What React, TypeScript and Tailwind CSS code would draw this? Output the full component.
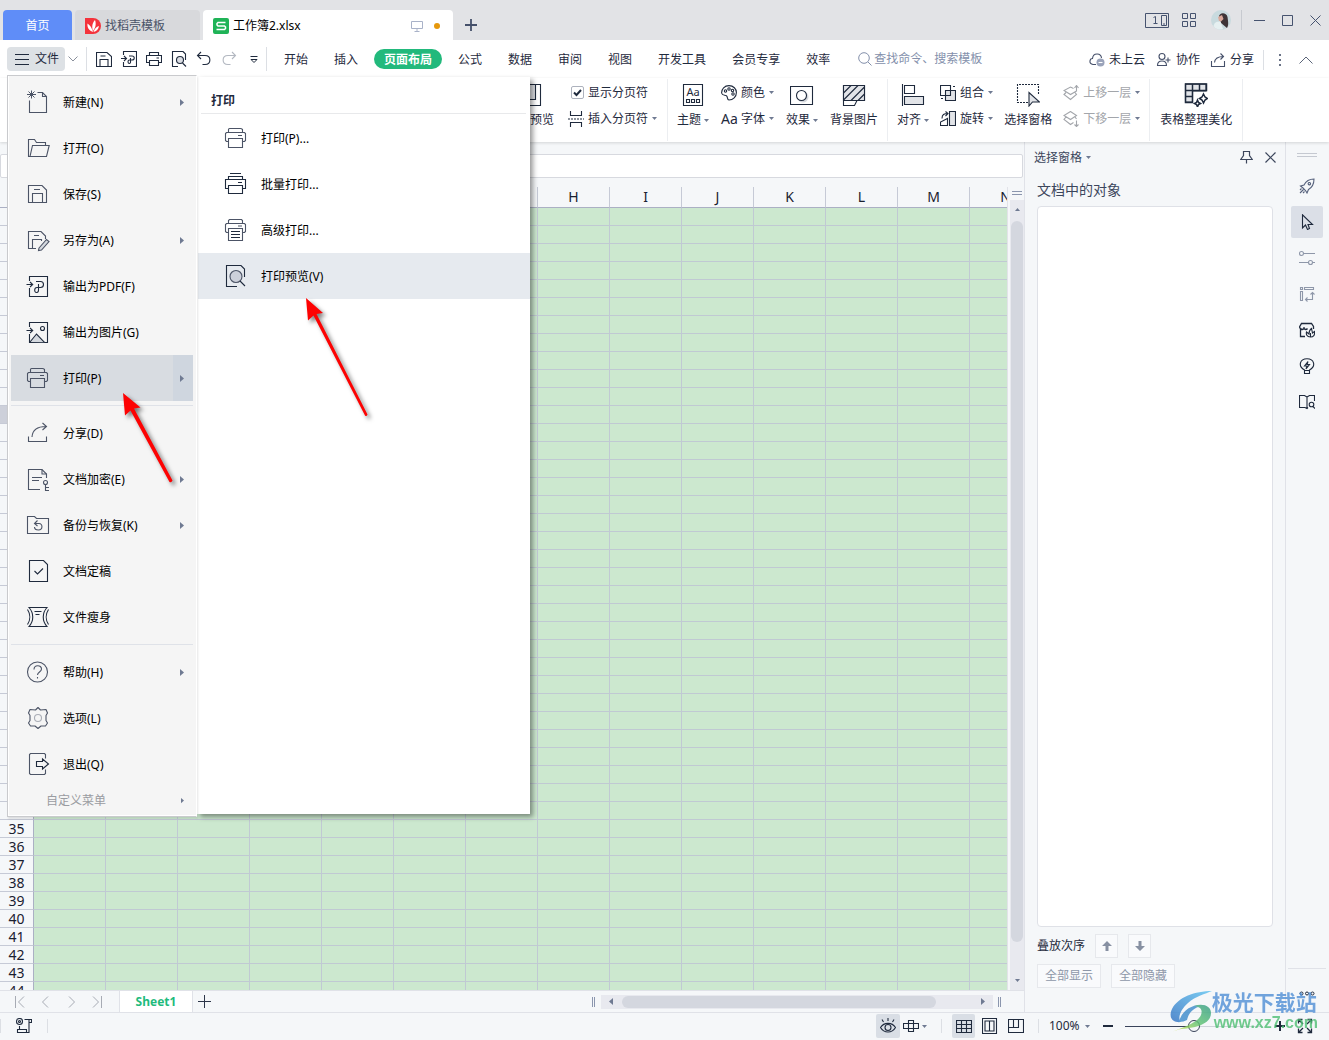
import React from 'react';
import { clsx } from 'clsx';

interface IconProps {
  className?: string;
  children?: React.ReactNode;
}

function Icon24({ className, children }: IconProps) {
  return (
    <svg viewBox="0 0 24 24" fill="none" stroke="currentColor" strokeWidth="1.1" className={clsx('h-6 w-6 shrink-0', className)} aria-hidden="true">
      {children}
    </svg>
  );
}

function Icon16({ className, children }: IconProps) {
  return (
    <svg viewBox="0 0 16 16" fill="none" stroke="currentColor" strokeWidth="1.1" className={clsx('h-4 w-4 shrink-0', className)} aria-hidden="true">
      {children}
    </svg>
  );
}

function Caret({ className }: { className?: string }) {
  return (
    <svg viewBox="0 0 5 3" className={clsx('h-[3px] w-[5px] shrink-0 fill-[#6f7a92]', className)} aria-hidden="true">
      <path d="M0 0H5L2.5 3Z" />
    </svg>
  );
}

function RightArrow({ className }: { className?: string }) {
  return (
    <svg viewBox="0 0 4 7" className={clsx('h-[7px] w-1 shrink-0 fill-[#6f7a92]', className)} aria-hidden="true">
      <path d="M0 0L4 3.5L0 7Z" />
    </svg>
  );
}

const icons = {
  newDoc: (
    <Icon24>
      <path d="M11.5 2.5H16.5L20.5 6.5V22.5H3.5V10.5" />
      <path d="M16.5 2.5V6.5H20.5" />
      <path d="M5.5 .5V8.5M1 4.5H10M2.5 1.5L8.5 7.5M8.5 1.5L2.5 7.5" strokeWidth="1" />
    </Icon24>
  ),
  open: (
    <Icon24>
      <path d="M4.5 20.5H2.5V3.5H8.5L10.5 6.5H19.5V9.5" />
      <path d="M6.5 9.5H23.2L20.5 20.5H4Z" />
    </Icon24>
  ),
  save: (
    <Icon24>
      <path d="M2.5 3.5H16L20.5 8V20.5H2.5Z" />
      <path d="M6.5 20.5V11.5H16.5V20.5M8 7.5H14" />
    </Icon24>
  ),
  saveAs: (
    <Icon24>
      <path d="M10 20.5H2.5V3.5H15L19.5 8V11" />
      <path d="M6.5 20.5V11.5H15.5V13M8 7.5H13" />
      <path d="M13 20L20.5 11.5L23 13.5L15.5 22L12.5 22.5Z" fill="#d5d9df" />
    </Icon24>
  ),
  pdf: (
    <Icon24 className="text-[#1f2a3d]">
      <path d="M3.5 7V2.5H21.5V22.5H3.5V14" />
      <path d="M.5 10.5H6.5M4 8L6.7 10.5L4 13" />
      <path d="M10 7.5H14.5C18.5 7.5 18.5 13.5 14.5 13.5H11C8 13.5 8 18.5 10.5 18.5C13 18.5 12.5 16 12.5 12V10" />
    </Icon24>
  ),
  image: (
    <Icon24 className="text-[#1f2a3d]">
      <path d="M3.5 7V2.5H21.5V22.5H3.5V14" />
      <path d="M.5 10.5H6.5M4 8L6.7 10.5L4 13" />
      <circle cx="16.5" cy="8.5" r="2" />
      <path d="M4 22L10.5 14L18.5 22.3" fill="#d5d9df" />
    </Icon24>
  ),
  print: (
    <Icon24>
      <path d="M4.5 6V3.5Q4.5 2.5 5.5 2.5H16.500Q17.500 2.500 18.500 3.500V6" />
      <path d="M4.500 15.500H2.500L1.500 14.500V7.500L2.500 6.500H20.500L21.500 7.500V14.500L20.500 15.500H18.500" />
      <path d="M4.500 12.500H18.500V21.500H4.500ZM14 9.500H18" />
    </Icon24>
  ),
  batchPrint: (
    <Icon24 className="text-[#1f2a3d]">
      <path d="M6 1.500H17M4.500 7V4.500H18.500V7" />
      <path d="M4.500 16.500H1.500V7.500H21.500V16.500H18.500" />
      <path d="M4.500 13.500H18.500V21.500H4.500ZM14 10.500H18" />
    </Icon24>
  ),
  advancedPrint: (
    <Icon24>
      <path d="M4.500 5V2.500L5.500 1.500H17.500L18.500 2.500V5" />
      <path d="M4.500 14.500H2.500L1.500 13.500V6.500L2.500 5.500H20.500L21.500 6.500V13.500L20.500 14.500H18.500" />
      <path d="M4.500 10.500H18.500V22.500H4.500ZM14 8H18" />
      <path d="M7 13.500H16M7 16.500H16M7 19.500H16" className="text-[#1f2a3d]" stroke="currentColor" />
    </Icon24>
  ),
  preview: (
    <Icon24 className="text-[#1f2a3d]">
      <path d="M13 22.500H2.500V1.500H17L20.500 5V13" />
      <circle cx="12" cy="12.500" r="6" fill="#ccd0da" stroke="#4c5466" />
      <path d="M16 17L21 22" />
    </Icon24>
  ),
  share: (
    <Icon24>
      <path d="M2.500 15.500V20.500H20.500V15.500" />
      <path d="M6 16C6.500 8.500 12 5.500 20 5.500M16.500 2L20.500 5.500L16.500 9" />
    </Icon24>
  ),
  encrypt: (
    <Icon24>
      <path d="M14 22.500H2.500V2.500H16L20.500 7V11" />
      <path d="M16 2.500V7H20.500M6 10.500H16M6 13.500H13" />
      <circle cx="19.500" cy="15.500" r="2" />
      <path d="M19.500 17.500V24M19.500 20.500H23M19.500 23.500H23" />
    </Icon24>
  ),
  backup: (
    <Icon24>
      <path d="M1.500 20.500V3.500H8.500L10.500 5.500H22.500V20.500Z" />
      <path d="M8.500 10.500H13C17 10.500 17 17 12.500 17C10 17 8.500 16 8.500 14M11.500 7.500L8.500 10.500L11.500 13" />
    </Icon24>
  ),
  finalize: (
    <Icon24 className="text-[#1f2a3d]">
      <path d="M3.500 1.500H17.500L21.500 5.500V22.500H3.500Z" />
      <path d="M8.500 12L11.500 15L17 9.500" />
    </Icon24>
  ),
  slim: (
    <Icon24 className="text-[#1f2a3d]">
      <path d="M3 2.500H21C16 8 16 16 21 21.500H3C8 16 8 8 3 2.500Z" />
      <path d="M1.500 4.500C4.500 9 4.500 15 1.500 19.500M22.500 4.500C19.500 9 19.500 15 22.500 19.500M8.500 6.500H15.500M9.500 9.500H13.500" />
    </Icon24>
  ),
  help: (
    <Icon24>
      <circle cx="11.500" cy="12" r="10" />
      <path d="M8 9.500C8 4.500 15.500 4.500 15.500 9C15.500 12 11.500 12 11.500 15M11.500 17V18.500" />
    </Icon24>
  ),
  options: (
    <Icon24>
      <path d="M9.500 4L12 1.500L14.500 4L20 3.500L21.500 7L20 9.500V14.500L21.500 17L19.500 20L15 20L12 22.500L9 20L4.500 20L2.500 17L4 14.500V9.500L2.500 7L4 3.500Z" strokeLinejoin="round" />
      <circle cx="12" cy="12" r="3.500" stroke="#aaaeb7" />
    </Icon24>
  ),
  exit: (
    <Icon24>
      <path d="M19.500 6.500V2.500L18.500 1.500H4.500L3.500 2.500V21.500L4.500 22.500H18.500L19.500 21.500V17.500" />
      <path d="M10.500 9.500H16.500V7L22.500 12L16.500 17V14.500H10.500Z" stroke="#1f2a3d" />
    </Icon24>
  ),
};

interface MenuEntry {
  label: string;
  icon: React.ReactNode;
  sub?: boolean;
  active?: boolean;
}

const fileMenu: MenuEntry[][] = [
  [
    { label: '新建(N)', icon: icons.newDoc, sub: true },
    { label: '打开(O)', icon: icons.open },
    { label: '保存(S)', icon: icons.save },
    { label: '另存为(A)', icon: icons.saveAs, sub: true },
    { label: '输出为PDF(F)', icon: icons.pdf },
    { label: '输出为图片(G)', icon: icons.image },
    { label: '打印(P)', icon: icons.print, sub: true, active: true },
  ],
  [
    { label: '分享(D)', icon: icons.share },
    { label: '文档加密(E)', icon: icons.encrypt, sub: true },
    { label: '备份与恢复(K)', icon: icons.backup, sub: true },
    { label: '文档定稿', icon: icons.finalize },
    { label: '文件瘦身', icon: icons.slim },
  ],
  [
    { label: '帮助(H)', icon: icons.help, sub: true },
    { label: '选项(L)', icon: icons.options },
    { label: '退出(Q)', icon: icons.exit },
  ],
];

const printMenu: MenuEntry[] = [
  { label: '打印(P)...', icon: icons.print },
  { label: '批量打印...', icon: icons.batchPrint },
  { label: '高级打印...', icon: icons.advancedPrint },
  { label: '打印预览(V)', icon: icons.preview, active: true },
];

const ribbonTabs = ['开始', '插入', '页面布局', '公式', '数据', '审阅', '视图', '开发工具', '会员专享', '效率'];
const columns = 'ABCDEFGHIJKLMN'.split('');
const rows = Array.from({ length: 44 }, (_, i) => i + 1);

function TitleBar() {
  return (
    <header className="flex h-10 shrink-0 items-end bg-[#e2e3e6] pl-[3px]">
      <button className="h-[30px] w-[69px] rounded-t-sm bg-[#5f8df8] pt-[2px] text-white">首页</button>
      <button className="ml-[3px] flex h-[30px] w-[125px] items-center gap-1 rounded-t-sm bg-[#d8d9dc] pl-[10px] pt-[2px] text-[#4a5368]">
        <svg viewBox="0 0 16 16" className="h-4 w-4" aria-hidden="true">
          <path d="M0 0H8A8 8 0 0 1 8 16H0Z" fill="#f4333c" />
          <path d="M8 14C3.500 12.500 2 9 2.500 5.500C5 7 7 10 8 14ZM8 13C6.500 8.500 7.500 4.500 10 2C11.500 6 10.500 10 8 13ZM8.500 14C9.500 10.500 11.500 8.500 14 8C13.500 11 11.500 13.500 8.500 14Z" fill="#fff" />
        </svg>
        找稻壳模板
      </button>
      <div className="ml-[3px] flex h-[30px] w-[250px] items-center rounded-t-sm bg-white px-[10px] pt-[2px] text-black">
        <svg viewBox="0 0 16 16" className="mr-1 h-4 w-4" aria-hidden="true">
          <rect width="16" height="16" rx="2" fill="#1fb357" />
          <path d="M12.500 4.500H5L4 5.500V7L5 8H11.500L12.500 9V10.500L11.500 11.500H3.500" stroke="#fff" strokeWidth="1.500" fill="none" />
        </svg>
        <span className="flex-1">工作簿2.xlsx</span>
        <svg viewBox="0 0 12 12" className="h-3 w-3 text-[#a9b2c8]" fill="none" stroke="currentColor" aria-hidden="true">
          <path d="M.5 1.500H11.500V8.500H.5ZM6 8.500V11.500M3.500 11.500H8.500" />
        </svg>
        <span className="ml-[11px] mr-[3px] h-[6px] w-[6px] rounded-full bg-[#e6980c]" />
      </div>
      <button aria-label="新建标签" className="flex h-[30px] w-9 items-center justify-center text-[#45506a]">
        <svg viewBox="0 0 12 12" className="h-3 w-3" aria-hidden="true">
          <path d="M6 0V12M0 6H12" stroke="currentColor" strokeWidth="1.800" />
        </svg>
      </button>
      <div className="ml-auto flex h-10 items-center text-[#46536f]">
        <button aria-label="窗口布局">
          <svg viewBox="0 0 24 15" className="h-[15px] w-6" fill="none" stroke="currentColor" aria-hidden="true">
            <path d="M.5 .5H23.500V14.500H.5ZM16.500 2.500H21.500V12.500H16.500ZM8.500 4.500L10.500 3.500V10.500M8.500 10.500H12.500M18 11H20" />
          </svg>
        </button>
        <button aria-label="应用" className="ml-[13px]">
          <svg viewBox="0 0 14 14" className="h-[14px] w-[14px]" fill="none" stroke="currentColor" aria-hidden="true">
            <path d="M.5 .5H5.500V5.500H.5ZM8.500 .5H13.500V5.500H8.500ZM.5 8.500H5.500V13.500H.5ZM8.500 8.500H13.500V13.500H8.500Z" />
          </svg>
        </button>
        <button aria-label="账号" className="ml-[15px]">
          <svg viewBox="0 0 20 20" className="h-5 w-5" aria-hidden="true">
            <circle cx="10" cy="10" r="10" fill="#c8dade" />
            <path d="M8 7C8 2 15.500 2 16.500 7C17 11 18 15 16 18L10 13Z" fill="#3d3437" />
            <path d="M7 7L11 5L12.500 9L10 11.500L8 11Z" fill="#d9a99b" />
            <path d="M2.500 16C3.500 12 6 11.500 9.500 11.500L12 19C8 20.500 4.500 19 2.500 16Z" fill="#e6f0f1" />
          </svg>
        </button>
        <span className="ml-[10px] h-5 w-px bg-[#c7cad0]" />
        <button aria-label="最小化" className="ml-3">
          <svg viewBox="0 0 11 11" className="h-[11px] w-[11px]" stroke="currentColor" aria-hidden="true"><path d="M0 5.500H11" /></svg>
        </button>
        <button aria-label="最大化" className="ml-[17px]">
          <svg viewBox="0 0 11 11" className="h-[11px] w-[11px]" fill="none" stroke="currentColor" aria-hidden="true"><path d="M.5 .5H10.500V10.500H.5Z" /></svg>
        </button>
        <button aria-label="关闭" className="ml-[17px] mr-2">
          <svg viewBox="0 0 11 11" className="h-[11px] w-[11px]" stroke="currentColor" aria-hidden="true"><path d="M.5 .5L10.500 10.500M10.500 .5L.5 10.500" /></svg>
        </button>
      </div>
    </header>
  );
}

const quickActions = [
  { label: '保存', art: <path d="M.5 1.500H11L15.500 5.500V15.500H.5ZM4 15.500V8.500H12V15.500M4.500 5H9.500" /> },
  { label: '输出为PDF', art: <path d="M2.500 4V.5H15.500V15.500H2.500V11M0 7.500H5M3 5L5.500 7.500L3 10M8 5H11C14 5 14 9 11 9H8.500C6.500 9 6.500 12.500 8.500 12.500C10 12.500 9.500 10 9.500 7" /> },
  { label: '打印', art: <path d="M3.500 4.500V1.500H12.500V4.500M3.500 11.500H.5V4.500H15.500V11.500H12.500M3.500 9.500H12.500V14.500H3.500ZM10.500 7H13" /> },
  {
    label: '打印预览',
    art: (
      <>
        <path d="M7 15.500H1.500V.5H12L14.500 3V9M11.500 12L15 15.500" />
        <circle cx="9" cy="9" r="3.500" fill="#dadde3" />
      </>
    ),
  },
  { label: '撤销', art: <path d="M5 1L1.500 4.500L5 8M1.500 4.500H9C15.500 4.500 15.500 13.500 9 13.500H6.500" /> },
  { label: '恢复', muted: true, art: <path d="M11 1L14.500 4.500L11 8M14.500 4.500H7C.5 4.500 .5 13.500 7 13.500H9.500" /> },
  { label: '更多', art: <path d="M4.500 5.500H11.500M5 8.500H11L8 11.500Z" strokeWidth="1" /> },
];

function MenuBar() {
  return (
    <nav className="flex h-[38px] shrink-0 items-center bg-white pl-[7px] text-[#1f2a3d]">
      <button className="flex h-6 w-[58px] items-center justify-center gap-[6px] rounded-sm bg-[#dde1e5] pl-[2px]">
        <svg viewBox="0 0 14 11" className="h-[11px] w-[14px]" stroke="currentColor" aria-hidden="true"><path d="M0 .5H14M0 5.500H14M0 10.500H14" /></svg>
        文件
      </button>
      <button aria-label="菜单" className="flex w-4 justify-center text-[#8a909c]">
        <svg viewBox="0 0 10 6" className="h-[6px] w-[10px]" fill="none" stroke="currentColor" aria-hidden="true"><path d="M.5 .5L5 5L9.500 .5" /></svg>
      </button>
      <span className="ml-[5px] mr-1 h-6 w-px bg-[#dcdfe4]" />
      {quickActions.map(action => (
        <button key={action.label} aria-label={action.label} className={clsx('flex w-[25px] justify-center', action.muted && 'text-[#b3b8c1]')}>
          <Icon16>{action.art}</Icon16>
        </button>
      ))}
      <span className="mr-1 h-6 w-px bg-[#dcdfe4]" />
      {ribbonTabs.map(tab => (
        <button
          key={tab}
          className={clsx(
            'h-5 whitespace-nowrap pt-[2px]',
            tab === '页面布局' ? 'mx-[3px] rounded-full bg-[#22b97c] px-[10px] font-bold text-white' : 'px-[13px]'
          )}
        >
          {tab}
        </button>
      ))}
      <label className="ml-[15px] flex items-center gap-[2px] text-[#8490ab]">
        <svg viewBox="0 0 14 14" className="h-[14px] w-[14px]" fill="none" stroke="currentColor" aria-hidden="true">
          <circle cx="6" cy="6" r="5.300" />
          <path d="M10 10L13.500 13.500" />
        </svg>
        <input aria-label="查找命令、搜索模板" placeholder="查找命令、搜索模板" className="w-[120px] bg-transparent outline-none placeholder:text-[#8490ab]" />
      </label>
      <div className="ml-auto flex items-center whitespace-nowrap pt-[2px]">
        <button className="flex items-center gap-1">
          <Icon16 className="text-[#46506a]">
            <path d="M7 12.500H4C-.5 12 .5 6.500 3.500 6.500C4 .5 12 .5 12.500 6" />
            <circle cx="11.500" cy="10.500" r="4" fill="#9aa3ba" stroke="none" />
            <path d="M9.500 10.500H13.500" stroke="#fff" />
          </Icon16>
          未上云
        </button>
        <button className="ml-[11px] flex items-center gap-1">
          <Icon16 className="text-[#46506a]">
            <circle cx="6" cy="4.500" r="3" />
            <path d="M1.500 13.500C1.500 7.500 10.500 7.500 10.500 13.500ZM12 5.500V10.500M9.500 8H14.500" />
          </Icon16>
          协作
        </button>
        <button className="ml-[10px] flex items-center gap-1">
          <Icon16 className="text-[#46506a]">
            <path d="M1.500 9V14.500H14.500V9M4.500 10.500C5 6 8 4.500 13.500 4.500M10.500 1.500L13.500 4.500L10.500 7.500" />
          </Icon16>
          分享
        </button>
        <span className="ml-[9px] h-5 w-px bg-[#dcdfe4]" />
        <button aria-label="更多选项" className="ml-[15px]">
          <svg viewBox="0 0 2 12" className="h-3 w-[2px] fill-[#6a7387]" aria-hidden="true"><path d="M0 0H2V2H0ZM0 5H2V7H0ZM0 10H2V12H0Z" /></svg>
        </button>
        <button aria-label="收起功能区" className="ml-[18px] mr-4 text-[#5b6579]">
          <svg viewBox="0 0 14 8" className="h-2 w-[14px]" fill="none" stroke="currentColor" aria-hidden="true"><path d="M.5 7.500L7 1L13.500 7.500" /></svg>
        </button>
      </div>
    </nav>
  );
}

function BigTool({ label, caret, children }: { label: string; caret?: boolean; children: React.ReactNode }) {
  return (
    <button className="flex h-14 flex-col items-center gap-[5px] whitespace-nowrap pt-1">
      <Icon24>{children}</Icon24>
      <span className="flex items-center gap-[3px]">
        {label}
        {caret && <Caret />}
      </span>
    </button>
  );
}

function SmallTool({ label, muted, art }: { label: string; muted?: boolean; art: React.ReactNode }) {
  return (
    <button className={clsx('flex h-[26px] items-center gap-1 whitespace-nowrap pt-px', muted && 'text-[#a3a6ab]')}>
      <Icon16>{art}</Icon16>
      {label}
      <Caret />
    </button>
  );
}

function Ribbon() {
  return (
    <div className="relative flex h-16 shrink-0 bg-white text-[#1f2a3d] shadow-[0_1px_3px_rgba(0,0,0,0.14)]">
      <div className="my-px flex gap-[14px] border-r border-[#eceef1] pl-[506px] pr-[10px]">
        <BigTool label="分页预览">
          <path d="M1.500 1.500H22.500V22.500H1.500Z" />
          <path d="M6.500 1.500H17.500V16.500H6.500Z" fill="#e2e4e8" />
        </BigTool>
        <div className="flex flex-col">
          <label className="flex h-[26px] items-center gap-1 whitespace-nowrap pl-[3px] pt-px">
            <span className="relative h-[13px] w-[13px]">
              <input type="checkbox" defaultChecked className="peer block h-[13px] w-[13px] appearance-none rounded-xs border border-[#adb2bd] bg-white" />
              <svg viewBox="0 0 13 13" className="pointer-events-none absolute inset-0 hidden h-[13px] w-[13px] peer-checked:block" fill="none" stroke="currentColor" strokeWidth="2" aria-hidden="true">
                <path d="M3 6.500L5.500 9L10 4" />
              </svg>
            </span>
            显示分页符
          </label>
          <SmallTool
            label="插入分页符"
            art={<><path d="M2.500 0V4.500H13.500V0M2.500 16V11.500H13.500V16" /><path d="M0 8H16" strokeDasharray="2 1" /></>}
          />
        </div>
      </div>
      <div className="my-px flex gap-3 border-r border-[#eceef1] px-[9px]">
        <BigTool label="主题" caret>
          <path d="M2.500 1.500H21.500V22.500H2.500ZM5.500 16.500H8.500V19.500H5.500ZM10.500 16.500H13.500V19.500H10.500ZM15.500 16.500H18.500V19.500H15.500Z" />
          <text x="12" y="12.500" textAnchor="middle" fontSize="11" fill="currentColor" stroke="none">Aa</text>
        </BigTool>
        <div className="flex flex-col">
          <SmallTool
            label="颜色"
            art={
              <>
                <path d="M8 15C5.500 15 7.500 11.500 5 10.500C3 10 1 10.500 .6 8C.5 4 3.500 .6 8 .6C12.500 .6 15.400 4 15.400 7.500C15.400 12 12 15 8 15Z" />
                <circle cx="4.500" cy="6" r="1.200" />
                <circle cx="8" cy="4" r="1.200" />
                <circle cx="11.500" cy="5.500" r="1.200" />
                <circle cx="12" cy="9" r="1.200" />
              </>
            }
          />
          <button className="flex h-[26px] items-center gap-1 whitespace-nowrap pt-px">
            <span className="w-4 text-sm">Aa</span>
            字体
            <Caret />
          </button>
        </div>
        <BigTool label="效果" caret>
          <path d="M.5 3.500H22.500V21.500H.5Z" />
          <circle cx="13" cy="14" r="5.500" fill="#d6d9de" stroke="none" />
          <circle cx="11.500" cy="12.500" r="5" fill="#fff" />
        </BigTool>
        <BigTool label="背景图片">
          <path d="M1.500 2.500H22.500V17.500H15L12.500 22.500H1.500Z" fill="#fff" />
          <path d="M1.500 2.500H22.500V17.500H1.500Z" fill="#e2e4e8" />
          <path d="M1.500 10L9 2.500M1.500 17L16 2.500M9 17.500L22.500 4M16 17.500L22.500 11" />
        </BigTool>
      </div>
      <div className="my-px flex gap-[11px] border-r border-[#eceef1] px-[9px]">
        <BigTool label="对齐" caret>
          <path d="M1.500 1V23M3.500 2.500H13.500V10.500H3.500Z" />
          <path d="M3.500 13.500H22.500V21.500H3.500Z" fill="#e2e4e8" />
        </BigTool>
        <div className="flex flex-col">
          <SmallTool
            label="组合"
            art={
              <>
                <path d="M.5 .5H10.500V10.500H.5Z" />
                <path d="M5.500 5.500H15.500V15.500H5.500Z" fill="#e2e4e8" />
                <path d="M10.500 5V10.500H5M13 1.500H15M1 13.500H3" />
              </>
            }
          />
          <SmallTool
            label="旋转"
            art={
              <>
                <path d="M.5 14.500H7.500V7.500L.5 11ZM2 7.500C2 3.500 4 2.500 8 2.500M5.500 .5L8 2.500L5.500 5" />
                <path d="M9.500 .5H15.500V14.500H9.500Z" fill="#e2e4e8" />
              </>
            }
          />
        </div>
        <BigTool label="选择窗格">
          <path d="M12 19.500H1.500V1.500H22.500V12" strokeDasharray="2 1" />
          <path d="M13 9.500V23L16.500 19H23.500Z" fill="#e2e4e8" />
        </BigTool>
        <div className="flex flex-col">
          <SmallTool label="上移一层" muted art={<path d="M10.500 3.500L7.500 2L1 5.500L7.500 9.500L13.500 6M3 7.500L1 9.500L7.500 14.500L13.500 9.500L12 7.500M13.500 6.500V.5M11.500 3L13.500 .5L15.500 3" />} />
          <SmallTool label="下移一层" muted art={<path d="M7.500 .5L1 4.500L7.500 8.500L13.500 4.500ZM3 6L1 8.500L7.500 13.500L10.500 11.500M12 6L13.500 8M13.500 9.500V15.500M11.500 13.500L13.500 15.500L15.500 13.500" />} />
        </div>
      </div>
      <div className="my-px flex border-r border-[#eceef1] px-[10px]">
        <BigTool label="表格整理美化">
          <path d="M1.500 1H22V8H8.500V19H1.500Z" fill="#e2e4e8" />
          <path d="M1.500 1H22.500V7.500H1.500ZM8.500 1V19.500H1.500V1M15.500 1V7.500M1.500 13.500H8.500" strokeWidth="1.500" />
          <path d="M19.500 11L21 14L23.500 15.500L21 17L19.500 20L18 17L15.500 15.500L18 14ZM13.500 17L14.500 19.500L16.500 20.500L14.500 21.500L13.500 24L12.500 21.500L10.500 20.500L12.500 19.500Z" strokeWidth="1.500" />
        </BigTool>
      </div>
    </div>
  );
}

function Sheet() {
  return (
    <div className="flex min-h-0 flex-1">
      <div className="min-w-0 flex-1 overflow-hidden bg-[#cce8cf]">
        <table className="w-[1042px] table-fixed border-separate border-spacing-0 text-center text-sm text-[#1a2030]">
          <thead>
            <tr className="bg-[#f5f7f9]">
              <th className="h-[21px] w-[34px] border-b border-r border-[#abb0c4] p-0" />
              {columns.map(col => (
                <th key={col} className="h-[21px] w-[72px] border-b border-r border-b-[#abb0c4] border-r-[#c6cad6] p-0 font-normal leading-5">
                  {col}
                </th>
              ))}
            </tr>
          </thead>
          <tbody>
            {rows.map(row => (
              <tr key={row}>
                <th className={clsx('h-[18px] border-b border-r border-b-[#c6cad6] border-r-[#abb0c4] p-0 font-normal leading-[17px]', row === 12 ? 'bg-[#cdd0da]' : 'bg-[#f5f7f9]')}>
                  {row}
                </th>
                {columns.map(col => (
                  <td key={col} className="h-[18px] border-b border-r border-[#c0c9d3] p-0" />
                ))}
              </tr>
            ))}
          </tbody>
        </table>
      </div>
      <div className="flex w-[17px] shrink-0 flex-col items-end border-l border-[#e2e3e9] bg-[#f5f7f9]">
        <div className="mr-[2px] mt-1 h-1 w-[10px] border-y border-[#8b96ae]" />
        <div className="mt-[5px] flex w-[14px] flex-1 flex-col items-center bg-[#e8e9ef] pb-2 pt-2">
          <Caret className="rotate-180" />
          <div className="mt-[10px] w-3 flex-1 rounded-full bg-[#d4d7df]" />
          <Caret className="mt-[37px]" />
        </div>
      </div>
    </div>
  );
}

const sheetNav = [
  { label: '第一个工作表', d: 'M1.500 1V13M10 1.500L4.500 7L10 12.500' },
  { label: '上一个工作表', d: 'M9 1.500L3.500 7L9 12.500' },
  { label: '下一个工作表', d: 'M5 1.500L10.500 7L5 12.500' },
  { label: '最后一个工作表', d: 'M4 1.500L9.500 7L4 12.500M12.500 1V13' },
];

function SheetTabs() {
  return (
    <div className="flex h-[22px] shrink-0 items-center border-t border-[#e0e2e8] bg-[#f5f7f9]">
      <div className="flex w-[119px] gap-[11px] pl-[14px] text-[#a7abb4]">
        {sheetNav.map(item => (
          <button key={item.label} aria-label={item.label}>
            <svg viewBox="0 0 14 14" className="h-[14px] w-[14px]" fill="none" stroke="currentColor" aria-hidden="true"><path d={item.d} /></svg>
          </button>
        ))}
      </div>
      <button className="h-full w-[74px] border-x border-[#e0e2e8] bg-white font-bold text-[#1fbb7d]">Sheet1</button>
      <button aria-label="新建工作表" className="ml-[5px] text-[#2d3649]">
        <svg viewBox="0 0 13 13" className="h-[13px] w-[13px]" stroke="currentColor" aria-hidden="true"><path d="M6.500 0V13M0 6.500H13" /></svg>
      </button>
      <div className="ml-auto flex items-center">
        <span className="mr-[6px] h-[10px] w-[3px] border-x border-[#8b96ae]" />
        <div className="flex h-[14px] w-[392px] items-center bg-[#e8e9ef] px-2">
          <RightArrow className="rotate-180" />
          <div className="ml-[9px] h-3 w-[314px] rounded-full bg-[#d4d7df]" />
          <RightArrow className="ml-auto" />
        </div>
        <span className="ml-[5px] mr-[23px] h-[10px] w-[3px] border-x border-[#8b96ae]" />
      </div>
    </div>
  );
}

function SelectionPane() {
  return (
    <aside className="flex w-[261px] shrink-0 flex-col border-l border-[#e0e2e8] pb-6 pl-3 pr-3 text-[#3c465c]">
      <div className="flex h-[30px] items-center">
        <button className="-ml-[3px] flex items-center gap-1 pt-px">
          选择窗格
          <Caret />
        </button>
        <button aria-label="固定" className="ml-auto">
          <svg viewBox="0 0 13 14" className="h-[14px] w-[13px]" fill="none" stroke="currentColor" strokeWidth="1.200" aria-hidden="true">
            <path d="M3.500 1.500H9.500V5.500L12.300 9.500H.7L3.500 5.500ZM6.500 9.500V13.500" />
          </svg>
        </button>
        <button aria-label="关闭窗格" className="ml-3 mr-[-3px]">
          <svg viewBox="0 0 11 11" className="h-[11px] w-[11px]" stroke="currentColor" strokeWidth="1.200" aria-hidden="true"><path d="M.5 .5L10.500 10.500M10.500 .5L.5 10.500" /></svg>
        </button>
      </div>
      <h2 className="flex h-[34px] items-center pt-[2px] text-sm">文档中的对象</h2>
      <div className="min-h-0 flex-1 rounded-sm border border-[#dfe1e7] bg-white" />
      <div className="mt-[7px] flex items-center gap-[10px]">
        <span className="text-[#1f2a3d]">叠放次序</span>
        {['上移', '下移'].map(dir => (
          <button key={dir} aria-label={dir} className="flex h-6 w-[23px] items-center justify-center border border-[#e6e8ec] bg-[#f9fafc]">
            <svg viewBox="0 0 10 10" className={clsx('h-[10px] w-[10px] fill-[#8790a2]', dir === '下移' && 'rotate-180')} aria-hidden="true">
              <path d="M5 0L10 5H6.500V10H3.500V5H0Z" />
            </svg>
          </button>
        ))}
      </div>
      <div className="mt-[6px] flex gap-[10px] text-[#8e97a9]">
        <button className="h-6 w-16 border border-[#e6e8ec] bg-[#f9fafc]">全部显示</button>
        <button className="h-6 w-16 border border-[#e6e8ec] bg-[#f9fafc]">全部隐藏</button>
      </div>
    </aside>
  );
}

const railTools = [
  {
    label: '快捷工具',
    tone: 'text-[#56617c]',
    art: <path d="M15 1C9.500 1 6.500 4 5 7L1.500 8L4 10L6.500 12.500L8 15L9.500 11.500C13 9.500 15 6.500 15 1ZM1 15L4.500 11.500M1 12L2.500 10.500M4 15L5.500 13.500M10.500 4.500A1.200 1.200 0 1 0 11.500 6A1.200 1.200 0 0 0 10.500 4.500Z" />,
  },
  { label: '选择', tone: 'text-[#1f2a3d] bg-[#dbdfe7]', art: <path d="M3.500 .8V14L6.500 11L8.500 15.500L10.500 14.500L9 10.500H13.500Z" /> },
  {
    label: '属性',
    tone: 'text-[#8e97a9]',
    art: (
      <>
        <circle cx="2.500" cy="3.500" r="2" />
        <circle cx="11.500" cy="12.500" r="2" />
        <path d="M4.500 3.500H16M0 12.500H9.500M13.500 12.500H16" />
      </>
    ),
  },
  { label: '分析', tone: 'text-[#8e97a9]', art: <path d="M1.500 1.500H3.500V3.500H1.500ZM5.500 1.500H14.500V3.500H5.500ZM1.500 5.500H3.500V14.500H1.500ZM6.500 13.500H13.500V6.500M11.500 8.500L13.500 6.500L15.500 8.500M8.500 11.500L6.500 13.500L8.500 15.500" /> },
  {
    label: '美化',
    tone: 'text-[#1f2a3d]',
    art: (
      <>
        <path d="M6 14.500H1.500V7L.5 5L2.500 1.500H12.500L14.500 4.500V7M1.500 6.500Q3 8.500 5 6.500V5M5 6.500Q7 8.500 8.500 6.500" strokeWidth="1.300" />
        <path d="M11.500 15C7.500 15 7 12 7.500 10L10 12C10 9 11 7.500 12.500 6.500L13.500 11L15.500 9.500C16 13 14.500 15 11.500 15ZM11.500 15V11" />
      </>
    ),
  },
  { label: '灵感', tone: 'text-[#1f2a3d]', art: <path d="M5.500 12C-1.500 8 1 .8 8 .8S17.500 8 10.500 12V15.500H5.500ZM5.500 12.500H10.500M9 3.500L5.500 8H8L7 11L10.500 6.500H8Z" /> },
  {
    label: '查阅',
    tone: 'text-[#1f2a3d]',
    art: (
      <>
        <path d="M8 3L5.500 1.500H.5V13.500H6L8 14.500L9 13.500M8 3L10.500 1.500H15.500V7M8 3V14" />
        <circle cx="12.500" cy="10.500" r="2.300" />
        <path d="M14 12.500L16 14.500" />
      </>
    ),
  },
];

function ToolRail() {
  return (
    <aside className="flex w-11 shrink-0 flex-col items-center border-l border-[#e0e2e8] pr-px">
      <div className="mb-[13px] mt-[11px] h-1 w-5 border-y border-[#c5c9d1]" />
      <div className="flex flex-col gap-1">
        {railTools.map(tool => (
          <button key={tool.label} aria-label={tool.label} className={clsx('flex h-8 w-8 items-center justify-center rounded-xs', tool.tone)}>
            <Icon16>{tool.art}</Icon16>
          </button>
        ))}
      </div>
      <div className="mt-auto h-px w-[38px] bg-[#e0e2e8]" />
      <button aria-label="更多工具" className="mb-4 mt-[22px]">
        <svg viewBox="0 0 16 5" className="h-[5px] w-4" fill="none" stroke="#1f2a3d" aria-hidden="true">
          <circle cx="2.500" cy="2.500" r="1.500" />
          <circle cx="8" cy="2.500" r="1.500" />
          <circle cx="13.500" cy="2.500" r="1.500" />
        </svg>
      </button>
    </aside>
  );
}

function StatusBar() {
  return (
    <footer className="flex h-7 shrink-0 items-center border-t border-[#e0e2e8] bg-[#f5f7f9] pb-px text-[#1f2a3d]">
      <span className="h-[14px] w-px bg-[#dcdfe4]" />
      <button aria-label="宏" className="ml-[15px]">
        <Icon16>
          <circle cx="3.500" cy="3.500" r="3" />
          <circle cx="3.500" cy="3.500" r="1" />
          <path d="M8.500 1.500H15.500V4.500H13V14.500H1.500V11.500H10.500V14M13 1.500V5M3.500 8V11.500" />
        </Icon16>
      </button>
      <span className="ml-[15px] h-[14px] w-px bg-[#dcdfe4]" />
      <div className="ml-auto flex items-center">
        <button aria-label="护眼模式" className="flex h-6 w-6 items-center justify-center rounded-xs bg-[#d9dee5]">
          <Icon16>
            <path d="M.5 9.500C4 4 12 4 15.500 9.500C12 15.500 4 15.500 .5 9.500ZM8 0V3M2 1.500L3.500 4M14 1.500L12.500 4" />
            <circle cx="8" cy="9.500" r="3" />
          </Icon16>
        </button>
        <button aria-label="阅读模式" className="ml-[3px] flex items-center gap-[3px]">
          <Icon16><path d="M5.500 2.500H10.500V13.500H5.500ZM.5 5.500H15.500V10.500H.5Z" /></Icon16>
          <Caret />
        </button>
        <span className="ml-[14px] mr-[10px] h-[14px] w-px bg-[#dcdfe4]" />
        <button aria-label="普通视图" className="flex h-6 w-[23px] items-center justify-center rounded-xs bg-[#d9dee5]">
          <Icon16><path d="M.5 2.500H15.500V14.500H.5ZM.5 6.500H15.500M.5 10.500H15.500M5.500 2.500V14.500M10.500 2.500V14.500" /></Icon16>
        </button>
        <button aria-label="页面布局视图" className="ml-[7px]">
          <Icon16><path d="M.5 .5H14.500V15.500H.5ZM3 3H7.500V13H3ZM7.500 3H12V13H7.500Z" /></Icon16>
        </button>
        <button aria-label="分页预览" className="ml-[10px]">
          <Icon16><path d="M.5 1.500H15.500V14.500H.5ZM.5 9.500H10.500V1.500M5.500 1.500V9.500" /></Icon16>
        </button>
        <span className="ml-[14px] h-[14px] w-px bg-[#dcdfe4]" />
        <label className="ml-[10px] flex items-center">
          <select aria-label="缩放比例" className="w-9 appearance-none bg-transparent">
            <option>100%</option>
          </select>
          <Caret />
        </label>
        <button aria-label="缩小" className="ml-[13px]">
          <svg viewBox="0 0 10 10" className="h-[10px] w-[10px]" stroke="currentColor" strokeWidth="2" aria-hidden="true"><path d="M0 5H10" /></svg>
        </button>
        <input
          type="range"
          aria-label="缩放"
          min={0}
          max={200}
          defaultValue={100}
          className="ml-3 h-3 w-[138px] appearance-none bg-transparent [&::-webkit-slider-runnable-track]:h-px [&::-webkit-slider-runnable-track]:bg-linear-to-r [&::-webkit-slider-runnable-track]:from-[#39435a] [&::-webkit-slider-runnable-track]:from-50% [&::-webkit-slider-runnable-track]:to-[#cfd3da] [&::-webkit-slider-runnable-track]:to-50% [&::-webkit-slider-thumb]:-mt-[6px] [&::-webkit-slider-thumb]:h-3 [&::-webkit-slider-thumb]:w-3 [&::-webkit-slider-thumb]:appearance-none [&::-webkit-slider-thumb]:rounded-full [&::-webkit-slider-thumb]:border [&::-webkit-slider-thumb]:border-[#39435a] [&::-webkit-slider-thumb]:bg-[#f5f7f9]"
        />
        <button aria-label="放大" className="ml-3">
          <svg viewBox="0 0 10 10" className="h-[10px] w-[10px]" stroke="currentColor" strokeWidth="2" aria-hidden="true"><path d="M5 0V10M0 5H10" /></svg>
        </button>
        <button aria-label="全屏" className="ml-3 mr-4">
          <Icon16><path d="M1.500 5.500V1.500H5.500M10.500 1.500H14.500V5.500M14.500 10.500V14.500H10.500M5.500 14.500H1.500V10.500M2 2L6 6M14 2L10 6M14 14L10 10M2 14L6 10" strokeWidth="1.300" /></Icon16>
        </button>
      </div>
    </footer>
  );
}

function FileMenu() {
  return (
    <div className="absolute left-[7px] top-[75px] z-20 w-[190px] border border-r-white border-[#c9cacd] bg-[#f5f5f5] px-[3px] py-[3px] text-black shadow-[inset_1px_-1px_0_#fff,1px_2px_2px_rgba(0,0,0,0.1)]">
      {fileMenu.map((group, i) => (
        <React.Fragment key={i}>
          {i > 0 && <div className="my-1 h-px bg-[#dfe2e8]" />}
          {group.map(item => (
            <button key={item.label} className={clsx('flex h-[46px] w-full items-center', item.active && 'bg-[#d8dce1]')}>
              <span className="ml-[15px] mr-[13px] text-[#4c5466]">{item.icon}</span>
              <span className="pt-[2px]">{item.label}</span>
              {item.sub && (
                <span className={clsx('ml-auto flex h-full w-5 items-center justify-center pr-[2px]', item.active && 'bg-[#cfd6df]')}>
                  <RightArrow />
                </span>
              )}
            </button>
          ))}
        </React.Fragment>
      ))}
      <button className="flex h-[26px] w-full items-center justify-between pl-[35px] pr-[9px] text-[#9a9ca1]">
        <span className="pt-[2px]">自定义菜单</span>
        <RightArrow className="h-[5px] w-[3px]" />
      </button>
    </div>
  );
}

function PrintMenu() {
  return (
    <div className="absolute left-[197px] top-[77px] z-10 h-[737px] w-[333px] bg-white pl-px text-black shadow-[3px_3px_5px_rgba(0,0,0,0.4)]">
      <h2 className="ml-[3px] mr-1 flex h-[37px] items-center border-b border-[#e8e9eb] pl-[10px] pt-3 font-bold text-[#1f2a3d]">打印</h2>
      <div className="pt-px">
        {printMenu.map(item => (
          <button key={item.label} className={clsx('flex h-[46px] w-full items-center', item.active && 'bg-[#e6eaef]')}>
            <span className="ml-[26px] mr-[13px] text-[#4c5466]">{item.icon}</span>
            <span className="pt-[2px]">{item.label}</span>
          </button>
        ))}
      </div>
    </div>
  );
}

function Pointer({ className }: { className: string }) {
  return (
    <svg viewBox="0 0 80 130" className={clsx('pointer-events-none absolute z-30 h-[130px] w-20 drop-shadow-[3px_3px_2px_rgba(0,0,0,0.5)]', className)} aria-hidden="true">
      <path d="M5 5L22 20L15.500 21L66.500 121.500Q65.500 124 64 122.500L12.500 22.500L7 27.500Z" fill="#fd0202" />
    </svg>
  );
}

function ShortPointer({ className }: { className: string }) {
  return (
    <svg viewBox="0 0 65 105" className={clsx('pointer-events-none absolute z-30 h-[105px] w-[65px] drop-shadow-[3px_3px_2px_rgba(0,0,0,0.5)]', className)} aria-hidden="true">
      <path d="M5 5L22.500 19.500L16 20.500L54.500 92.500Q53.500 95 51.500 94L12.500 22.500L7 27.500Z" fill="#fd0202" />
    </svg>
  );
}

function SiteBadge() {
  return (
    <div className="pointer-events-none absolute bottom-[7px] right-[11px] z-30 flex items-center opacity-80">
      <svg viewBox="0 0 42 42" className="h-[42px] w-[42px]" aria-hidden="true">
        <defs>
          <linearGradient id="swirlBlue" x1="0" y1="1" x2="1" y2="0">
            <stop offset="0" stopColor="#2d6fc2" />
            <stop offset="1" stopColor="#5cc3f1" />
          </linearGradient>
          <linearGradient id="swirlGreen" x1="0" y1="1" x2="1" y2="0">
            <stop offset="0" stopColor="#d6e34c" />
            <stop offset="0.500" stopColor="#5cc270" />
            <stop offset="1" stopColor="#2f9a83" />
          </linearGradient>
        </defs>
        <path d="M42 0C25 0 8 6 2 18C-2 27 3 32 11 31C7 27 11 18 18 12C26 5 35 3 42 0Z" fill="url(#swirlBlue)" />
        <path d="M9 31C12 18 24 12 36 14.500C26 15 19 20 17 29Q14 31 9 31Z" fill="#3a8acb" />
        <path d="M24 15C33 12 41 15 41 22C41 30 33 34 25 36C17 38 11 37 3 40.500C17 35 28 31 31 24C33 18 30 16 24 15Z" fill="url(#swirlGreen)" />
      </svg>
      <div className="flex flex-col whitespace-nowrap font-bold">
        <span className="text-[21px] leading-[22px] text-[#4f8fd6]">极光下载站</span>
        <span className="pl-[2px] font-['Liberation_Sans',sans-serif] text-base leading-5 text-[#4fbf74]">www.xz7.com</span>
      </div>
    </div>
  );
}

export default function App() {
  return (
    <div className="relative flex h-screen flex-col overflow-hidden bg-[#f5f7f9] font-['Noto_Sans','Noto_Sans_CJK_SC',sans-serif] text-xs">
      <TitleBar />
      <MenuBar />
      <Ribbon />
      <div className="flex min-h-0 flex-1">
        <main className="flex min-w-0 flex-1 flex-col">
          <div className="flex h-[45px] shrink-0 pr-px pt-3">
            <input aria-label="编辑栏" className="h-6 w-full rounded-xs border border-[#d7d9df] bg-white px-2 outline-none" />
          </div>
          <Sheet />
          <SheetTabs />
        </main>
        <SelectionPane />
        <ToolRail />
      </div>
      <StatusBar />
      <FileMenu />
      <PrintMenu />
      <Pointer className="left-[301px] top-[293px]" />
      <ShortPointer className="left-[118px] top-[388px]" />
      <SiteBadge />
    </div>
  );
}
